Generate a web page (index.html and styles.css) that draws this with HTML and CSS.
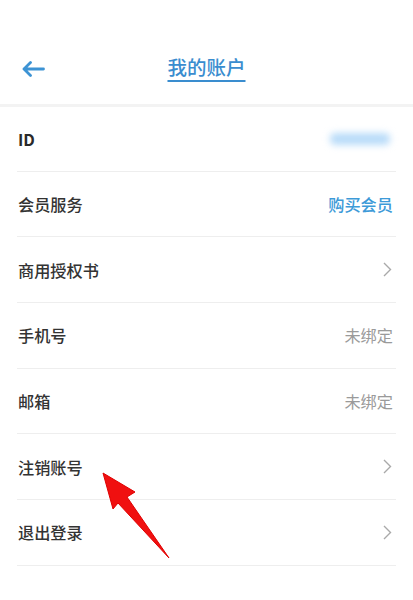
FILE: index.html
```html
<!DOCTYPE html>
<html lang="zh">
<head>
<meta charset="utf-8">
<link rel="stylesheet" href="styles.css">
</head>
<body>
<div class="page">
  <header class="header">
    <svg class="back" width="24" height="16" viewBox="0 0 24 16"><path d="M22.5 8H3M9.5 1.5L3 8l6.5 6.5" fill="none" stroke="#3d93d4" stroke-width="2.8" stroke-linecap="round" stroke-linejoin="round"/></svg>
    <h1 class="title">我的账户</h1>
  </header>
  <ul class="list">
    <li class="row"><span class="label bold">ID</span><span class="blur"></span></li>
    <li class="row"><span class="label">会员服务</span><span class="link">购买会员</span></li>
    <li class="row"><span class="label">商用授权书</span><svg class="chev" width="9" height="15" viewBox="0 0 9 15"><path d="M1 1l6.5 6.5L1 14" fill="none" stroke="#a9a9a9" stroke-width="1.4"/></svg></li>
    <li class="row"><span class="label">手机号</span><span class="muted">未绑定</span></li>
    <li class="row"><span class="label">邮箱</span><span class="muted">未绑定</span></li>
    <li class="row"><span class="label">注销账号</span><svg class="chev" width="9" height="15" viewBox="0 0 9 15"><path d="M1 1l6.5 6.5L1 14" fill="none" stroke="#a9a9a9" stroke-width="1.4"/></svg></li>
    <li class="row"><span class="label">退出登录</span><svg class="chev" width="9" height="15" viewBox="0 0 9 15"><path d="M1 1l6.5 6.5L1 14" fill="none" stroke="#a9a9a9" stroke-width="1.4"/></svg></li>
  </ul>
  <svg class="pointer" width="413" height="600" viewBox="0 0 413 600"><polygon points="103,473 135,492 127,497 169,558 118,503 113,509" fill="#f01010" stroke="#e00000" stroke-width="1" stroke-linejoin="round"/></svg>
</div>
</body>
</html>
```
FILE: styles.css
```css
* { box-sizing: border-box; }
html, body { margin: 0; padding: 0; background: #fff; }
body {
  font-family: "Noto Sans CJK SC", "Noto Sans", sans-serif;
  color: #333;
}
.page { position: relative; width: 413px; height: 600px; overflow: hidden; }
.header {
  position: relative;
  height: 107px;
  padding-top: 34px;
  border-bottom: 3px solid #f3f3f3;
  display: flex;
  align-items: center;
  justify-content: center;
}
.back { position: absolute; left: 21px; top: 61px; }
.title {
  margin: 0;
  font-size: 19.5px;
  font-weight: 500;
  color: #3a8dcf;
  text-decoration: underline;
  text-underline-offset: 5px;
  text-decoration-thickness: 1.5px;
  line-height: 1;
  margin-top: -4px;
}
.list { list-style: none; margin: 0; padding: 0; }
.row {
  height: 65.7px;
  margin: 0 17px;
  padding: 0 3px 0 1px;
  border-bottom: 1px solid #eeeeee;
  display: flex;
  align-items: center;
  justify-content: space-between;
}
.row:first-child { height: 64.5px; }
.label { font-size: 16.2px; font-weight: 500; color: #333; }
.bold { font-weight: 700; color: #2a2a2a; }
.link { font-size: 16.2px; font-weight: 500; color: #3d9ad8; }
.muted { font-size: 16.2px; color: #9a9a9a; }
.chev { margin-right: 1px; }
.blur {
  display: block;
  width: 60px;
  height: 12px;
  margin-right: 3px;
  background: #b9dcf9;
  filter: blur(3.5px);
  border-radius: 5px;
}
.pointer { position: absolute; left: 0; top: 0; pointer-events: none; }
```
